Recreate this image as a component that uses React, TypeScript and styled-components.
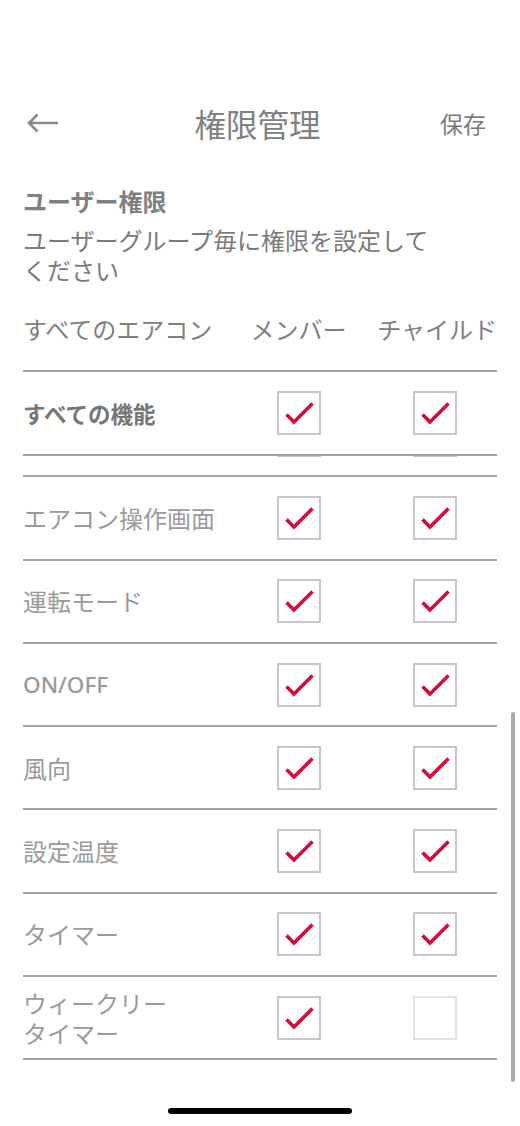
import React from "react";
import styled, { createGlobalStyle } from "styled-components";

const Global = createGlobalStyle`
  html, body { margin: 0; padding: 0; background: #fff; }
  body { font-family: "Noto Sans CJK JP", "Noto Sans", sans-serif; }
  * { box-sizing: border-box; }
`;

const Page = styled.div`
  position: relative;
  width: 520px;
  height: 1126px;
  overflow: hidden;
  background: #fff;
  padding-top: 98px;
`;

const Header = styled.header`
  height: 50px;
  display: grid;
  grid-template-columns: 1fr auto 1fr;
  align-items: center;
  padding: 0 34px 0 26px;
`;

const BackButton = styled.button`
  justify-self: start;
  border: 0;
  background: none;
  padding: 0;
  display: flex;
  align-items: center;
  cursor: pointer;
`;

const Title = styled.h1`
  margin: 0 0 0 3px;
  font-size: 31.5px;
  font-weight: 400;
  color: #808080;
  line-height: 50px;
`;

const SaveButton = styled.button`
  justify-self: end;
  border: 0;
  background: none;
  padding: 0;
  font-family: inherit;
  font-size: 23px;
  color: #7a7a7a;
`;

const Intro = styled.section`
  padding: 38px 23px 0 23px;
`;

const SectionTitle = styled.h2`
  margin: 0;
  font-size: 24px;
  line-height: 30px;
  font-weight: 700;
  color: #808080;
`;

const Description = styled.p`
  margin: 9px 0 0 0;
  font-size: 24px;
  line-height: 30px;
  color: #7a7a7a;
  width: 420px;
`;

const Table = styled.div`
  margin: 29px 23px 0 23px;
  width: 474px;
`;

const ColumnHeader = styled.div`
  display: grid;
  grid-template-columns: minmax(0, 1fr) 137px 130px;
  align-items: center;
  height: 58px;
  padding-bottom: 28px;
  border-bottom: 2px solid #a3a3a3;
  font-size: 24px;
  line-height: 30px;
  color: #808080;
  white-space: nowrap;
`;

const HeadCell = styled.span<{ $end?: boolean }>`
  justify-self: ${(p) => (p.$end ? "end" : "center")};
`;

const Row = styled.div<{ $bold?: boolean }>`
  display: grid;
  grid-template-columns: minmax(0, 1fr) 137px 130px;
  align-items: center;
  height: ${(p) => (p.$bold ? "84px" : "83.3px")};
  border-bottom: 2px solid #a3a3a3;
  font-size: ${(p) => (p.$bold ? "22.5px" : "24px")};
  font-weight: ${(p) => (p.$bold ? 700 : 400)};
  color: ${(p) => (p.$bold ? "#767676" : "#9a9a9a")};
  line-height: 30px;
  background: #fff;
`;

const Label = styled.span<{ $latin?: boolean }>`
  white-space: nowrap;
  font-size: ${(p) => (p.$latin ? "22.5px" : "inherit")};
  font-weight: ${(p) => (p.$latin ? 500 : "inherit")};
  font-family: ${(p) =>
    p.$latin ? '"Noto Sans", "Noto Sans CJK JP", sans-serif' : "inherit"};
`;

const Sticky = styled.div`
  position: relative;
  z-index: 1;
  background: #fff;
`;

const ScrollArea = styled.div`
  height: 605px;
  overflow: hidden;
`;

const ScrollContent = styled.div`
  margin-top: -62px;
`;

const Box = styled.span<{ $checked: boolean; $end?: boolean }>`
  justify-self: ${(p) => (p.$end ? "end" : "center")};
  margin-right: ${(p) => (p.$end ? "40px" : "0")};
  width: 44px;
  height: 44px;
  border: 2px solid ${(p) => (p.$checked ? "#c6c6c6" : "#e2e2e2")};
  background: #fff;
  display: flex;
  align-items: center;
  justify-content: center;
`;

const Check = ({ on }: { on: boolean }) =>
  on ? (
    <svg width="40" height="40" viewBox="0 0 40 40">
      <path
        d="M7.5 21.5 L15 29 L33.5 10.5"
        fill="none"
        stroke="#d20d3b"
        strokeWidth="3.6"
        strokeLinecap="butt"
        strokeLinejoin="miter"
      />
    </svg>
  ) : null;

const Checkbox = ({ on, end }: { on: boolean; end?: boolean }) => (
  <Box $checked={on} $end={end} role="checkbox" aria-checked={on}>
    <Check on={on} />
  </Box>
);

const ScrollBar = styled.div`
  position: absolute;
  right: 5px;
  top: 712px;
  width: 4px;
  height: 370px;
  border-radius: 2px;
  background: #ababab;
`;

const HomeIndicator = styled.div`
  position: absolute;
  left: 168px;
  top: 1108px;
  width: 184px;
  height: 6px;
  border-radius: 3px;
  background: #000;
`;

type Item = { label: React.ReactNode; member: boolean; child: boolean; latin?: boolean };

const items: Item[] = [
  { label: "", member: true, child: true },
  { label: "エアコン操作画面", member: true, child: true },
  { label: "運転モード", member: true, child: true },
  { label: "ON/OFF", member: true, child: true, latin: true },
  { label: "風向", member: true, child: true },
  { label: "設定温度", member: true, child: true },
  { label: "タイマー", member: true, child: true },
  {
    label: (
      <>
        ウィークリー
        <br />
        タイマー
      </>
    ),
    member: true,
    child: false,
  },
];

export default function App() {
  return (
    <Page>
      <Global />
      <Header>
        <BackButton aria-label="戻る">
          <svg width="34" height="22" viewBox="0 0 34 22">
            <path
              d="M32 11 H3 M11.5 2.5 L3 11 L11.5 19.5"
              fill="none"
              stroke="#8a8a8a"
              strokeWidth="2.6"
            />
          </svg>
        </BackButton>
        <Title>権限管理</Title>
        <SaveButton>保存</SaveButton>
      </Header>
      <Intro>
        <SectionTitle>ユーザー権限</SectionTitle>
        <Description>ユーザーグループ毎に権限を設定してください</Description>
      </Intro>
      <Table>
        <Sticky>
          <ColumnHeader>
            <span>すべてのエアコン</span>
            <HeadCell>メンバー</HeadCell>
            <HeadCell $end>チャイルド</HeadCell>
          </ColumnHeader>
          <Row $bold>
            <Label>すべての機能</Label>
            <Checkbox on />
            <Checkbox on end />
          </Row>
        </Sticky>
        <ScrollArea>
          <ScrollContent>
            {items.map((it, i) => (
              <Row key={i}>
                <Label $latin={it.latin}>{it.label}</Label>
                <Checkbox on={it.member} />
                <Checkbox on={it.child} end />
              </Row>
            ))}
          </ScrollContent>
        </ScrollArea>
      </Table>
      <ScrollBar />
      <HomeIndicator />
    </Page>
  );
}
